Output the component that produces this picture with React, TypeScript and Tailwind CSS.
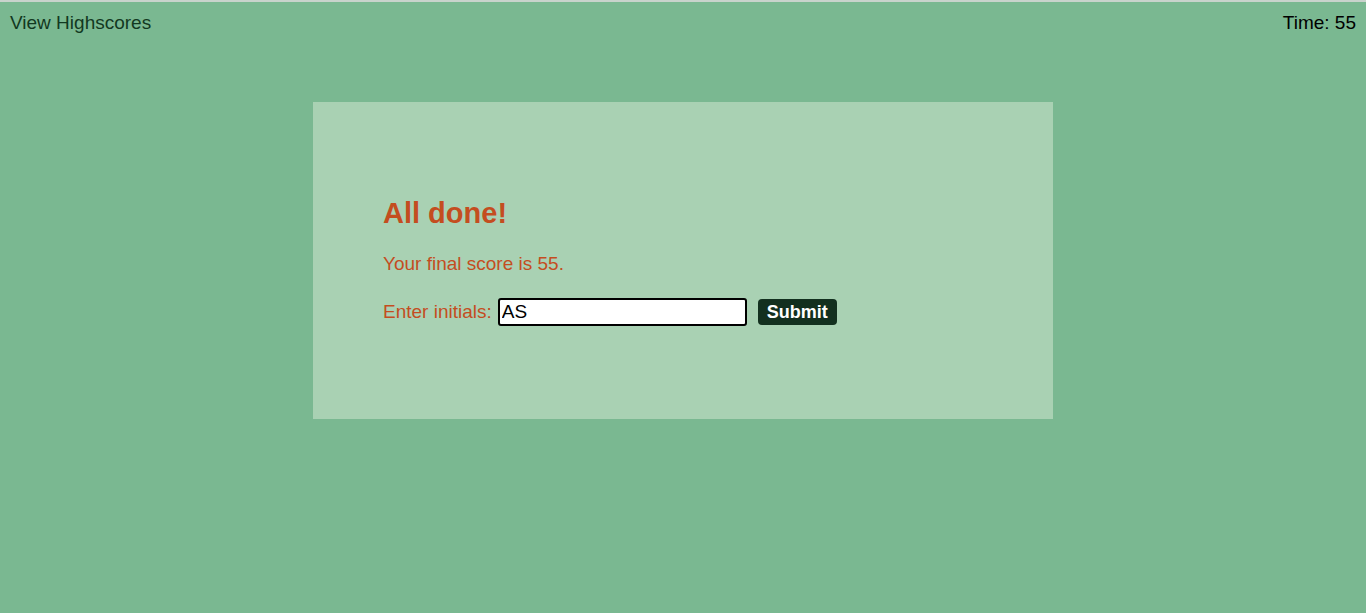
export default function App() {
  return (
    <div className="min-h-[613px] bg-[#7ab891] font-['Liberation_Sans',Arial,sans-serif]">
      <div className="h-[2px] bg-[#c9d3cc]" />
      <header className="flex h-[43px] items-center justify-between px-[10px] text-[19px]">
        <a className="text-[#123821]">View Highscores</a>
        <span className="text-black">Time: 55</span>
      </header>

      <div className="flex justify-center pt-[57px]">
        <section className="h-[317px] w-[740px] bg-[#a9d1b3] pl-[70px] pt-[95px]">
          <h2 className="text-[29px] font-bold leading-[32px] text-[#c44d1f]">All done!</h2>
          <p className="mt-[21px] text-[19px] leading-[27px] text-[#c44d1f]">Your final score is 55.</p>
          <div className="mt-[21px] flex items-center text-[19px]">
            <label className="mr-[6px] text-[#c44d1f]">Enter initials:</label>
            <input
              defaultValue="AS"
              className="h-[28px] w-[249px] rounded-[3px] border-2 border-black bg-white px-[2px] text-[19px] text-black outline-none"
            />
            <button className="ml-[11px] h-[26px] w-[79px] rounded-[4px] bg-[#13301f] text-[18px] font-bold text-white">
              Submit
            </button>
          </div>
        </section>
      </div>
    </div>
  );
}
